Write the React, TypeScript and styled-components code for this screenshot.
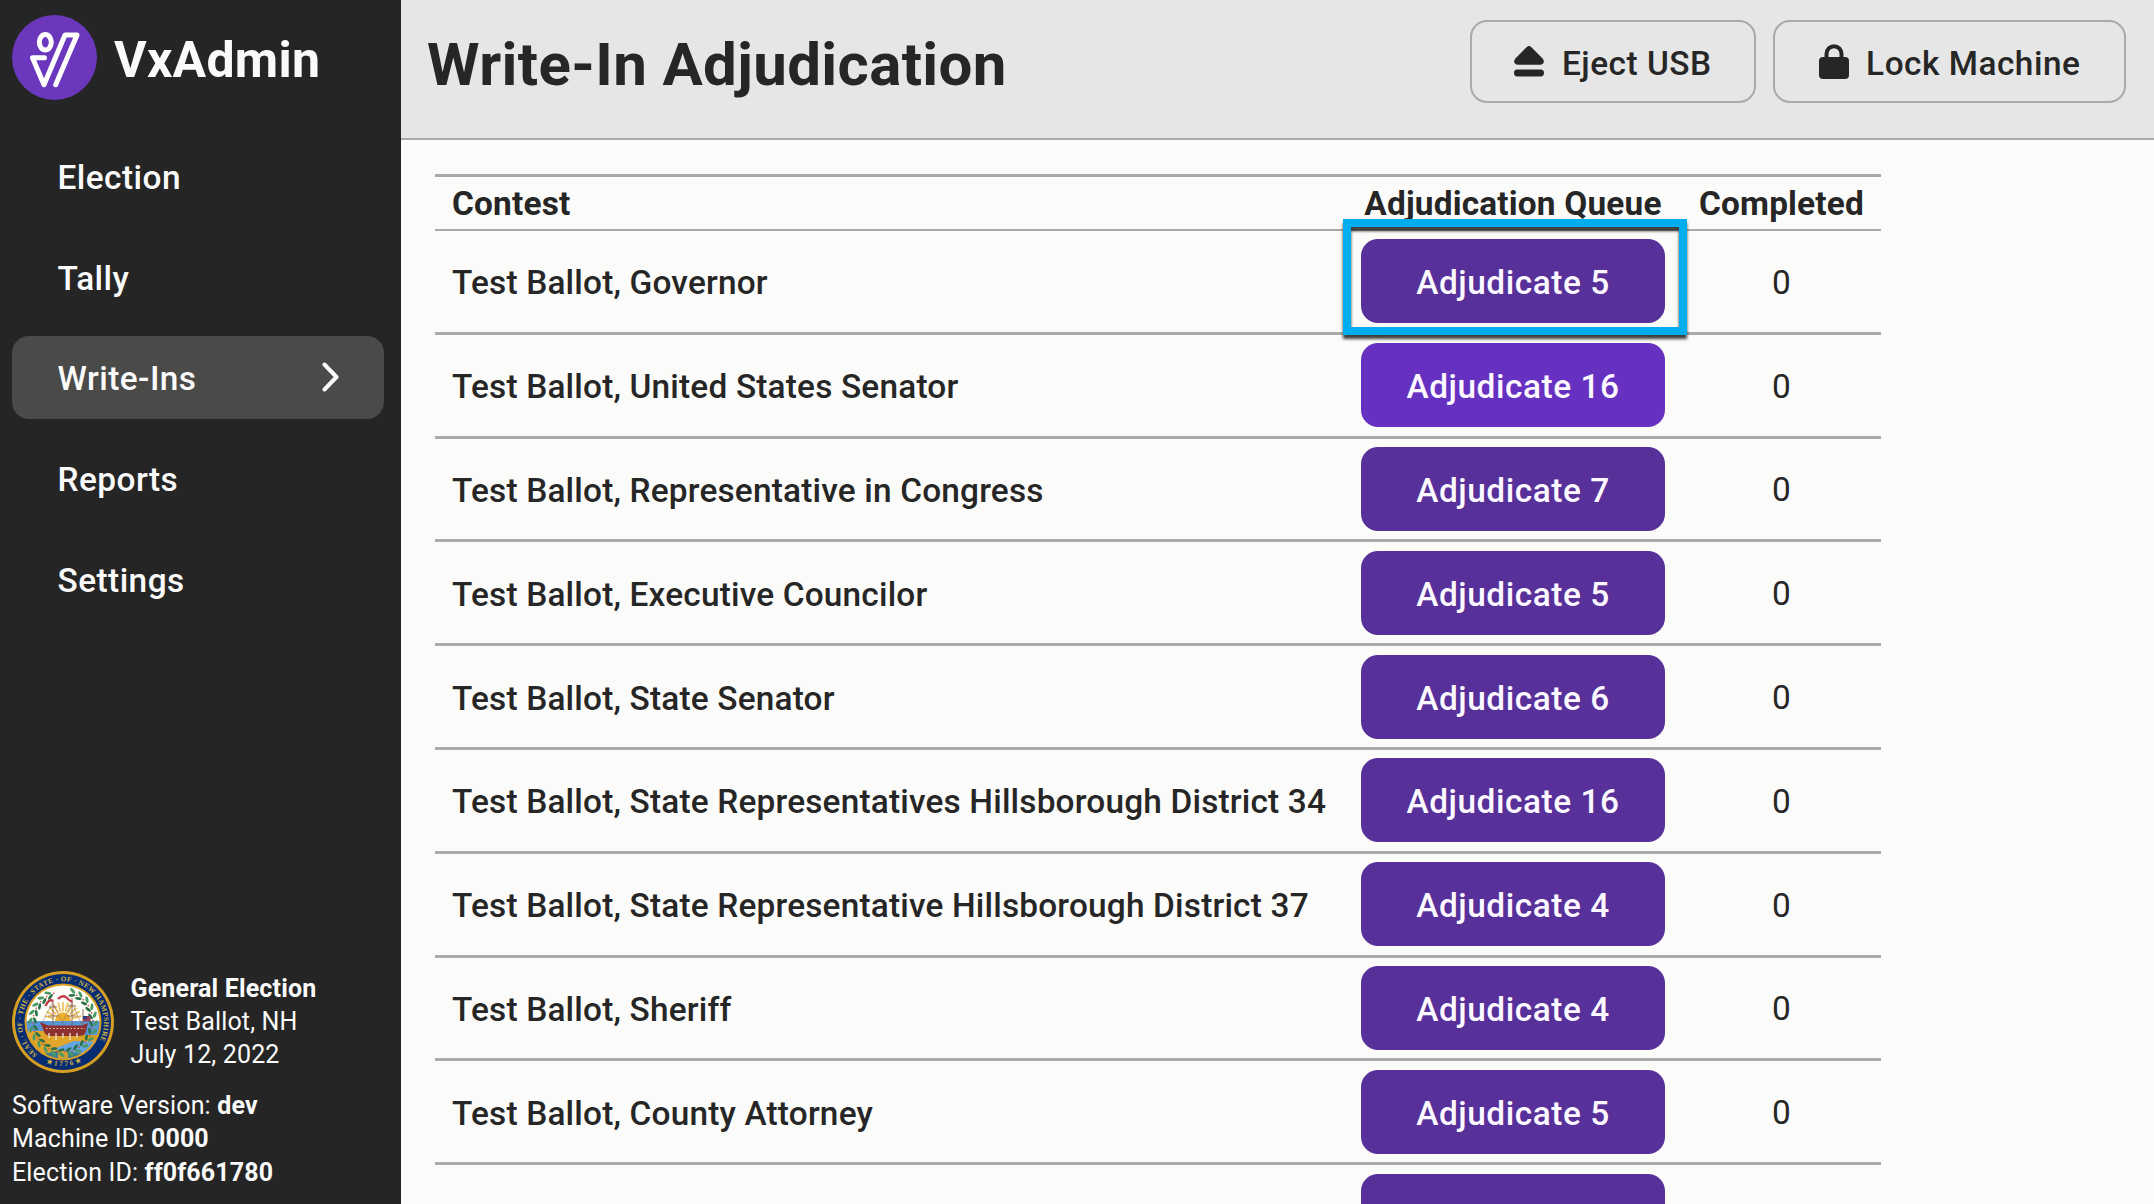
import React from "react";
import styled, { createGlobalStyle } from "styled-components";

const GlobalStyle = createGlobalStyle`
  * { box-sizing: border-box; }
  html, body { margin: 0; padding: 0; }
  body {
    overflow: hidden;
    font-family: Roboto, "Liberation Sans", sans-serif;
    font-size: 33.4px;
    letter-spacing: 0.18px;
    color: #262626;
  }
`;

const Screen = styled.div`
  display: flex;
  width: 2154px;
  height: 1204px;
  overflow: hidden;
  background: #fbfcf9;
`;

const Sidebar = styled.aside`
  display: flex;
  flex-direction: column;
  flex: 0 0 401px;
  padding: 15px 17px 0 12px;
  background: #252525;
  color: #fafafa;
`;

const Brand = styled.div`
  display: flex;
  align-items: center;
  gap: 17px;
  height: 85px;
  svg { display: block; flex: none; }
`;

const BrandName = styled.span`
  padding-top: 4px;
  font-size: 50px;
  line-height: 60px;
  font-weight: 700;
  letter-spacing: 0.25px;
`;

const Nav = styled.nav`
  display: flex;
  flex-direction: column;
  gap: 17px;
  margin-top: 34.5px;
`;

const NavItem = styled.a<{ $active?: boolean }>`
  display: flex;
  align-items: center;
  justify-content: space-between;
  height: 83.6px;
  padding: 0 44px 0 45.5px;
  border-radius: 17px;
  background: ${(p) => (p.$active ? "#4a4a49" : "transparent")};
  font-weight: 500;
  letter-spacing: 0.45px;
`;

const NavLabel = styled.span`
  padding-top: 3px;
`;

const Footer = styled.footer`
  display: flex;
  flex-direction: column;
  gap: 16.5px;
  margin-top: auto;
  padding-bottom: 15px;
  font-size: 25px;
  line-height: 33.3px;
  letter-spacing: 0.15px;
`;

const ElectionInfo = styled.div`
  display: flex;
  align-items: center;
  gap: 16.5px;
  line-height: 33px;
  svg { display: block; flex: none; }
`;

const Line = styled.div``;

const Main = styled.main`
  flex: 1;
  min-width: 0;
  display: flex;
  flex-direction: column;
`;

const Header = styled.header`
  display: flex;
  align-items: flex-start;
  justify-content: space-between;
  flex: none;
  height: 140px;
  padding: 20px 28px 0 26px;
  background: #e6e6e6;
  border-bottom: 2px solid #aaaaaa;
`;

const Title = styled.h1`
  margin: 9px 0 0;
  font-size: 60px;
  line-height: 72px;
  font-weight: 700;
  letter-spacing: 0.36px;
`;

const Actions = styled.div`
  display: flex;
  gap: 17px;
`;

const ActionButton = styled.button<{ $width: number }>`
  display: flex;
  align-items: center;
  justify-content: center;
  gap: 17.5px;
  width: ${(p) => p.$width}px;
  height: 83px;
  padding: 0;
  border: 2px solid #aaaaaa;
  border-radius: 17px;
  background: transparent;
  color: #262626;
  font: inherit;
  font-weight: 500;
  letter-spacing: 0.5px;
  svg { display: block; flex: none; }
`;

const ButtonLabel = styled.span`
  display: inline-block;
  padding-top: 3px;
`;

const Content = styled.section`
  padding: 34px 0 0 34px;
`;

const Table = styled.div`
  width: 1446px;
  border-top: 3px solid #aaaaaa;
`;

const HeadRow = styled.div`
  display: grid;
  grid-template-columns: 909px 338px 199px;
  align-items: center;
  height: 54px;
  border-bottom: 2px solid #aaaaaa;
  font-weight: 700;
`;

const Row = styled.div`
  display: grid;
  grid-template-columns: 909px 338px 199px;
  align-items: center;
  height: 103.8px;
  border-bottom: 3px solid #aaaaaa;
`;

const Cell = styled.div<{ $center?: boolean; $medium?: boolean; $drop?: number }>`
  position: relative;
  display: flex;
  justify-content: ${(p) => (p.$center ? "center" : "flex-start")};
  padding-top: ${(p) => p.$drop ?? 0}px;
  padding-left: ${(p) => (p.$center ? 0 : 17)}px;
  font-weight: ${(p) => (p.$medium ? 500 : "inherit")};
  white-space: nowrap;
`;

const Adjudicate = styled.button<{ $hover?: boolean }>`
  width: 304px;
  height: 84px;
  padding: 0;
  border: 0;
  border-radius: 17px;
  background: ${(p) => (p.$hover ? "#6631c0" : "#583099")};
  color: #fcf8ff;
  font: inherit;
  font-weight: 500;
  letter-spacing: 0.55px;
`;

const Highlight = styled.div`
  position: absolute;
  left: -1px;
  top: -20px;
  width: 344px;
  height: 116px;
  border: 8px solid #00aeef;
  filter: drop-shadow(0 4px 1.5px rgba(0, 0, 0, 0.75));
`;

const SealText = styled.text`
  font-family: "Liberation Serif", serif;
  font-weight: 700;
  letter-spacing: 0;
  fill: #d2b545;
`;

const Logo = () => (
  <svg width="85" height="85" viewBox="0 0 85 85" fill="none">
    <circle cx="42.5" cy="42.5" r="42.5" fill="#6a37bd" />
    <g stroke="#fff" strokeWidth="5" strokeLinecap="round" strokeLinejoin="round">
      <ellipse cx="33.3" cy="27.3" rx="6" ry="7.7" />
      <path d="M32.500 42.800H20.500L32 69.700L53 20H65L43.700 69.700" />
    </g>
  </svg>
);

const Chevron = () => (
  <svg width="19" height="30" viewBox="0 0 19 30" fill="none">
    <path d="M3.500 2.500L15.500 15L3.500 27.500" stroke="#fafafa" strokeWidth="4" strokeLinecap="round" strokeLinejoin="round" />
  </svg>
);

const EjectIcon = () => (
  <svg width="30" height="31" viewBox="0 0 30 31" fill="#262626">
    <path d="M12.600 1.200Q15-1 17.400 1.200L28.600 12.600Q31 15.700 28.800 17.800Q28 18.800 26 18.800H4Q2 18.800 1.200 17.800Q-1 15.700 1.400 12.600Z" />
    <rect y="23.500" width="30" height="7" rx="3.400" />
  </svg>
);

const LockIcon = () => (
  <svg width="30" height="35" viewBox="0 0 30 35">
    <path d="M7.500 15V10a7.500 7.800 0 0 1 15 0V15" fill="none" stroke="#262626" strokeWidth="4" />
    <rect y="13" width="30" height="22" rx="4" fill="#262626" />
  </svg>
);

const LEAVES = Array.from({ length: 24 }, (_, i) => 7.5 + i * 15).filter((a) => a > 10 && a < 350);

const Seal = () => (
  <svg width="102" height="102" viewBox="0 0 102 102">
    <defs>
      <path id="sealTop" d="M25.500 83.500A41 41 0 1 1 76.500 83.500" />
      <path id="sealBottom" d="M20 82.500A44.500 44.500 0 0 0 82 82.500" />
      <clipPath id="sealInner"><circle cx="51" cy="51" r="36.500" /></clipPath>
    </defs>
    <circle cx="51" cy="51" r="51" fill="#d79f22" />
    <circle cx="51" cy="51" r="48" fill="#082c72" />
    <circle cx="51" cy="51" r="38.500" fill="#d79f22" />
    <g clipPath="url(#sealInner)">
      <rect width="102" height="51" fill="#fdfdf8" />
      <rect y="50" width="102" height="14" fill="#5796d8" />
      <path d="M12 60L40 60L68 67L90 70V102H12Z" fill="#e2a52b" />
      <path d="M42 78L62 70L90 71V83L60 82Z" fill="#63a4e6" />
      <path d="M26 84L50 79L76 84L68 92H34Z" fill="#3c7f90" />
      <path d="M46 80H56V90H46Z" fill="#d8a034" />
      <path d="M43 50a8 8.500 0 0 1 16 0Z" fill="#eeb02d" />
      <g stroke="#f0bd55" strokeWidth="1.600">
        {[-75, -60, -45, -30, -15, 0, 15, 30, 45, 60, 75].map((a) => (
          <path key={a} d="M51 40.500V31" transform={`rotate(${a} 51 50)`} />
        ))}
      </g>
      {LEAVES.map((a) => (
        <g key={a} transform={`rotate(${a} 51 51)`}>
          <ellipse cx="48" cy="18.500" rx="3.400" ry="1.500" fill="#4a9a68" transform="rotate(28 48 18.500)" />
          <ellipse cx="49" cy="23" rx="3.300" ry="1.400" fill="#2c7048" transform="rotate(-28 49 23)" />
          <circle cx="53.500" cy="21" r="0.800" fill="#c64d42" />
        </g>
      ))}
      <g stroke="#8a6450" strokeWidth="0.900" fill="none">
        <path d="M41 29V57M60 27V57M71 38V57M37 36H45M56 35H64M36 45H46M55 45H65" />
        <path d="M41 31L30 52M41 33L52 54M60 30L50 53M60 32L70 54" strokeOpacity="0.5" />
      </g>
      <path d="M33.500 35Q37 27 41 30M46 28Q51 23 55 27T60.500 30" stroke="#c53a48" strokeWidth="2.400" fill="none" />
      <rect x="71" y="45" width="7.500" height="5.500" fill="#96405c" />
      <rect x="71" y="45" width="4" height="3" fill="#2e3d78" />
      <path d="M28 51L36 54.500H70L76 52L73.500 62Q72 65 66 65H38Q32 64 31 58Z" fill="#8d3030" />
      <path d="M34 57.500H73" stroke="#e8cdb8" strokeWidth="1.200" strokeDasharray="1.500 2" />
      <path d="M37 62V67M44 62V69M51 62V67M58 62V69M65 62V67" stroke="#ece4da" strokeWidth="1.300" />
    </g>
    <SealText fontSize="7.2" textLength="184" lengthAdjust="spacing">
      <textPath href="#sealTop">SEAL · OF · THE · STATE · OF · NEW HAMPSHIRE</textPath>
    </SealText>
    <SealText fontSize="7" textLength="36">
      <textPath href="#sealBottom" startOffset="17">★1776★</textPath>
    </SealText>
  </svg>
);

const CONTESTS: { name: string; count: number }[] = [
  { name: "Governor", count: 5 },
  { name: "United States Senator", count: 16 },
  { name: "Representative in Congress", count: 7 },
  { name: "Executive Councilor", count: 5 },
  { name: "State Senator", count: 6 },
  { name: "State Representatives Hillsborough District 34", count: 16 },
  { name: "State Representative Hillsborough District 37", count: 4 },
  { name: "Sheriff", count: 4 },
  { name: "County Attorney", count: 5 },
];

export default function App() {
  return (
    <Screen>
      <GlobalStyle />
      <Sidebar>
        <Brand>
          <Logo />
          <BrandName>VxAdmin</BrandName>
        </Brand>
        <Nav>
          {["Election", "Tally", "Write-Ins", "Reports", "Settings"].map((label) => (
            <NavItem key={label} $active={label === "Write-Ins"}>
              <NavLabel>{label}</NavLabel>
              {label === "Write-Ins" && <Chevron />}
            </NavItem>
          ))}
        </Nav>
        <Footer>
          <ElectionInfo>
            <Seal />
            <div>
              <Line><b>General Election</b></Line>
              <Line>Test Ballot, NH</Line>
              <Line>July 12, 2022</Line>
            </div>
          </ElectionInfo>
          <div>
            <Line>Software Version: <b>dev</b></Line>
            <Line>Machine ID: <b>0000</b></Line>
            <Line>Election ID: <b>ff0f661780</b></Line>
          </div>
        </Footer>
      </Sidebar>
      <Main>
        <Header>
          <Title>Write-In Adjudication</Title>
          <Actions>
            <ActionButton $width={286}><EjectIcon /><ButtonLabel>Eject USB</ButtonLabel></ActionButton>
            <ActionButton $width={353}><LockIcon /><ButtonLabel>Lock Machine</ButtonLabel></ActionButton>
          </Actions>
        </Header>
        <Content>
          <Table>
            <HeadRow>
              <Cell>Contest</Cell>
              <Cell $center>Adjudication Queue</Cell>
              <Cell $center>Completed</Cell>
            </HeadRow>
            {CONTESTS.map((c, i) => (
              <Row key={c.name}>
                <Cell $medium $drop={3}>Test Ballot, {c.name}</Cell>
                <Cell $center>
                  <Adjudicate $hover={i === 1}><ButtonLabel>Adjudicate {c.count}</ButtonLabel></Adjudicate>
                  {i === 0 && <Highlight />}
                </Cell>
                <Cell $center $drop={2}>0</Cell>
              </Row>
            ))}
            <Row>
              <Cell />
              <Cell $center><Adjudicate /></Cell>
              <Cell />
            </Row>
          </Table>
        </Content>
      </Main>
    </Screen>
  );
}
